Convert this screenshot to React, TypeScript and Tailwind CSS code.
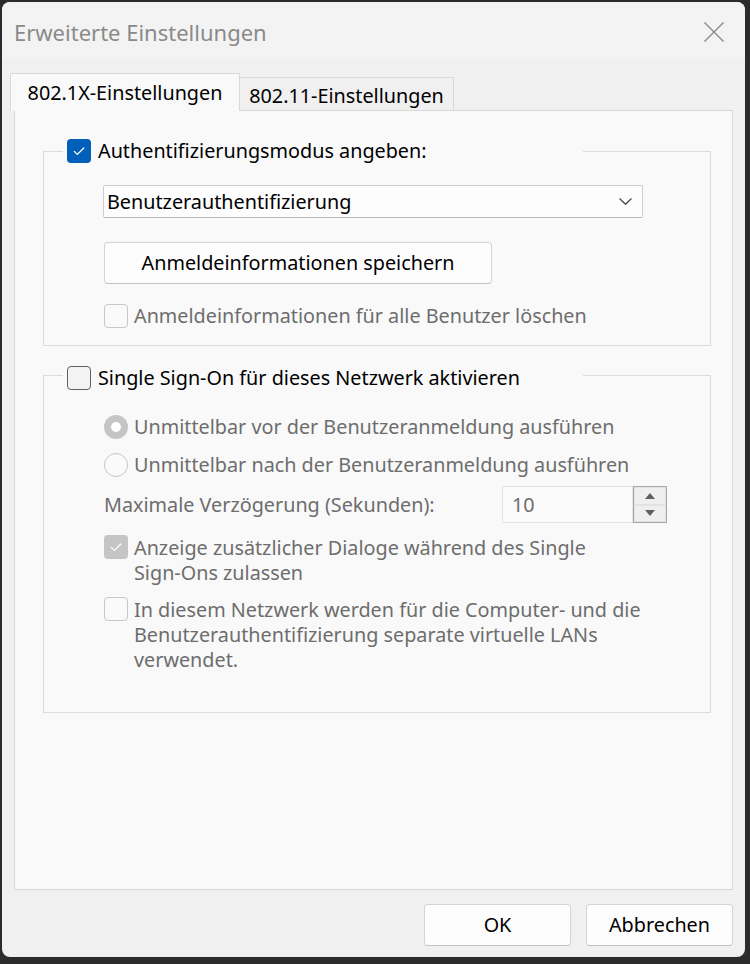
import React from "react";

const Check = ({ color = "#ffffff" }: { color?: string }) => (
  <svg width="24" height="24" viewBox="0 0 24 24">
    <path d="M7.2 12.4 L10.4 15.4 L16.8 9" fill="none" stroke={color} strokeWidth="1.3" strokeLinecap="round" strokeLinejoin="round" />
  </svg>
);

export default function App() {
  return (
    <div className="w-[750px] h-[964px] bg-[#2b2b2b] pt-[2px] pl-[2px] pr-[5px] pb-[7px] font-['Noto_Sans',sans-serif] text-[19.8px]">
      <div className="w-full h-full rounded-[8px] overflow-hidden bg-[#f0f0f0] flex flex-col">
        {/* Title bar */}
        <div className="h-[57px] bg-[#f3f3f3] flex items-center justify-between pl-[12px] pr-[21px] shrink-0">
          <span className="text-[22px] text-[#8a8a8a] leading-none mt-[3px]">Erweiterte Einstellungen</span>
          <svg width="20" height="20" viewBox="0 0 20 20" className="mt-[2px]">
            <path d="M0.5 0.5 L19.5 19.5 M19.5 0.5 L0.5 19.5" stroke="#8a8a8a" strokeWidth="1.4" fill="none" />
          </svg>
        </div>

        {/* Body */}
        <div className="flex flex-col px-[12px] pt-[14px]">
          {/* Tabs */}
          <div className="flex items-end h-[37px]">
            <div className="relative z-10 -ml-[4px] -mb-[1px] w-[230px] h-[38px] bg-[#f9f9f9] border border-b-0 border-[#d9d9d9] flex items-center justify-center text-black">
              <span>802.1X-Einstellungen</span>
            </div>
            <div className="w-[214px] h-[33px] bg-[#f0f0f0] border-t border-r border-[#d9d9d9] flex items-center justify-center text-black">
              <span className="mt-[4px]">802.11-Einstellungen</span>
            </div>
          </div>

          {/* Panel */}
          <div className="h-[780px] border border-[#d9d9d9] bg-[#f9f9f9] pt-[28px] pl-[28px] pr-[21px]">
            {/* Group 1 */}
            <fieldset className="border border-[#dcdcdc] pb-[17px]">
              <legend className="ml-[19px] w-[520px] pl-[4px]">
                <div className="flex items-center h-[24px] gap-[7px]">
                  <div className="w-[24px] h-[24px] rounded-[4px] bg-[#005fb8] flex items-center justify-center">
                    <Check />
                  </div>
                  <span className="text-black leading-none">Authentifizierungsmodus angeben:</span>
                </div>
              </legend>
              <div className="pl-[59px]">
                <div className="mt-[22px] w-[540px] h-[33px] bg-[#fdfdfd] border border-[#cdcdcd] border-b-[#b9b9b9] rounded-[2px] flex items-center justify-between pl-[3px] pr-[10px]">
                  <span className="text-black leading-none">Benutzerauthentifizierung</span>
                  <svg width="13" height="7" viewBox="0 0 13 7">
                    <path d="M0.5 0.5 L6.5 6.3 L12.5 0.5" fill="none" stroke="#444444" strokeWidth="1.2" />
                  </svg>
                </div>
                <div className="mt-[24px] ml-[1px] w-[388px] h-[42px] bg-[#fdfdfd] border border-[#d4d4d4] border-b-[#c2c2c2] rounded-[4px] flex items-center justify-center">
                  <span className="text-black leading-none">Anmeldeinformationen speichern</span>
                </div>
                <div className="mt-[20px] ml-[1px] flex items-center gap-[6px] h-[24px]">
                  <div className="w-[24px] h-[24px] rounded-[4px] border border-[#c8c8c8] bg-[#f9f9f9]" />
                  <span className="text-[#6d6d6d] leading-none">Anmeldeinformationen für alle Benutzer löschen</span>
                </div>
              </div>
            </fieldset>

            {/* Group 2 */}
            <fieldset className="mt-[14px] border border-[#dcdcdc] pb-[40px]">
              <legend className="ml-[19px] w-[520px] pl-[4px] pt-[6px]">
                <div className="flex items-center h-[24px] gap-[7px]">
                  <div className="w-[24px] h-[24px] rounded-[4px] border border-[#616161] bg-[#f3f3f3]" />
                  <span className="text-black leading-none">Single Sign-On für dieses Netzwerk aktivieren</span>
                </div>
              </legend>
              <div className="pl-[60px] text-[#6d6d6d]">
                <div className="mt-[25px] flex items-center gap-[6px] h-[24px]">
                  <div className="w-[24px] h-[24px] rounded-full bg-[#c5c5c5] flex items-center justify-center">
                    <div className="w-[10px] h-[10px] rounded-full bg-white" />
                  </div>
                  <span className="leading-none">Unmittelbar vor der Benutzeranmeldung ausführen</span>
                </div>
                <div className="mt-[14px] flex items-center gap-[6px] h-[24px]">
                  <div className="w-[24px] h-[24px] rounded-full border border-[#c5c5c5] bg-[#fafafa]" />
                  <span className="leading-none">Unmittelbar nach der Benutzeranmeldung ausführen</span>
                </div>
                <div className="mt-[9px] flex items-center h-[37px]">
                  <span className="w-[398px] leading-none">Maximale Verzögerung (Sekunden):</span>
                  <div className="flex h-[37px]">
                    <div className="w-[131px] h-full bg-[#fbfbfb] border border-[#e3e3e3] flex items-center pl-[9px]">
                      <span className="leading-none">10</span>
                    </div>
                    <div className="w-[34px] h-full border border-[#a8a8a8] flex flex-col">
                      <div className="flex-1 border border-[#e2e2e2] bg-[#efefef] flex items-center justify-center">
                        <svg width="10" height="6" viewBox="0 0 10 6"><path d="M0 6 L5 0 L10 6 Z" fill="#606060" /></svg>
                      </div>
                      <div className="flex-1 border border-[#e2e2e2] bg-[#efefef] flex items-center justify-center">
                        <svg width="10" height="6" viewBox="0 0 10 6"><path d="M0 0 L5 6 L10 0 Z" fill="#606060" /></svg>
                      </div>
                    </div>
                  </div>
                </div>
                <div className="mt-[12px] flex items-start gap-[6px]">
                  <div className="w-[24px] h-[24px] shrink-0 rounded-[4px] bg-[#c5c5c5] flex items-center justify-center">
                    <Check />
                  </div>
                  <span className="leading-[25px]">
                    Anzeige zusätzlicher Dialoge während des Single
                    <br />
                    Sign-Ons zulassen
                  </span>
                </div>
                <div className="mt-[12px] flex items-start gap-[6px]">
                  <div className="w-[24px] h-[24px] shrink-0 rounded-[4px] border border-[#c8c8c8] bg-[#f9f9f9]" />
                  <span className="leading-[25px]">
                    In diesem Netzwerk werden für die Computer- und die
                    <br />
                    Benutzerauthentifizierung separate virtuelle LANs
                    <br />
                    verwendet.
                  </span>
                </div>
              </div>
            </fieldset>
          </div>

          {/* Footer */}
          <div className="flex justify-end gap-[15px] pt-[14px]">
            <div className="w-[147px] h-[42px] bg-[#fdfdfd] border border-[#d4d4d4] border-b-[#c2c2c2] rounded-[4px] flex items-center justify-center">
              <span className="text-black leading-none">OK</span>
            </div>
            <div className="w-[147px] h-[42px] bg-[#fdfdfd] border border-[#d4d4d4] border-b-[#c2c2c2] rounded-[4px] flex items-center justify-center">
              <span className="text-black leading-none">Abbrechen</span>
            </div>
          </div>
        </div>
      </div>
    </div>
  );
}
